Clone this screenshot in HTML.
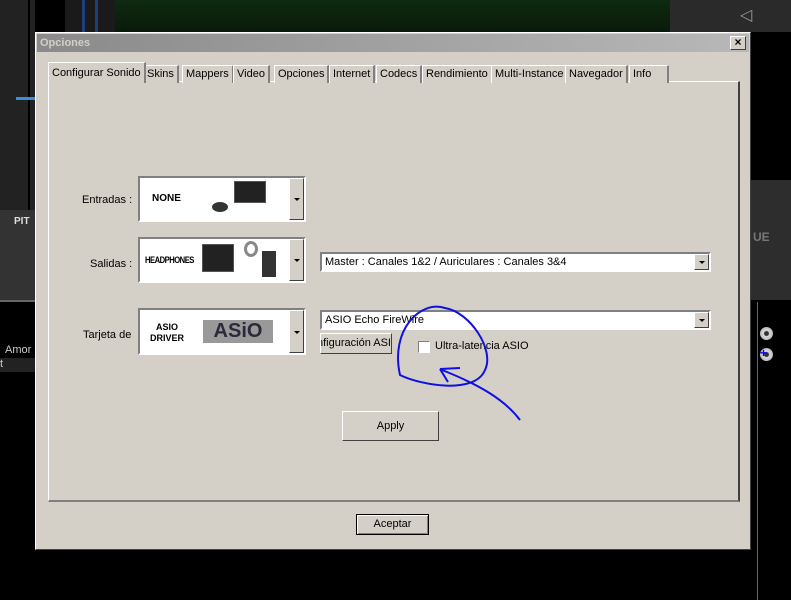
<!DOCTYPE html>
<html><head><meta charset="utf-8"><style>
*{box-sizing:border-box;margin:0;padding:0}
body{width:791px;height:600px;background:#000;position:relative;overflow:hidden;font-family:"Liberation Sans",sans-serif;font-size:11px;color:#000}
.abs{position:absolute}
.dlg{left:35px;top:32px;width:716px;height:518px;background:#d4d0c8;border:1px solid #fff;border-right-color:#404040;border-bottom-color:#404040}
.title{left:1px;top:1px;width:712px;height:18px;background:linear-gradient(90deg,#8a8a8a,#b8b8b8);color:#d4d0c8;font-weight:bold;padding:3px 3px;font-size:11px}
.xbtn{left:694px;top:3px;width:16px;height:14px;background:#d4d0c8;border:1px solid #fff;border-right-color:#404040;border-bottom-color:#404040;font-size:12px;line-height:11px;text-align:center;font-weight:bold}
.tab{top:32px;height:18px;border:1px solid #fff;border-bottom:none;border-right:2px solid #808080;padding:2px 3px;white-space:nowrap;background:#d4d0c8}
.panel{left:12px;top:48px;width:692px;height:421px;border:1px solid #fff;border-right:2px solid #404040;border-bottom:2px solid #808080}
.combo{background:#fff;border:2px inset #808080;border-style:solid;border-color:#808080 #fff #fff #808080}
.dd{position:absolute;right:0;top:0;bottom:0;width:15px;background:#d4d0c8;border:1px solid #fff;border-right-color:#404040;border-bottom-color:#404040}
.dd:after{content:"";position:absolute;left:4px;top:50%;margin-top:-1px;border:3px solid transparent;border-top:3px solid #000}
.btn{background:#d4d0c8;border:1px solid #fff;border-right-color:#404040;border-bottom-color:#404040;text-align:center;white-space:nowrap}
.lbl{font-size:11px}
.laptop{background:#222;border:1px solid #555}
</style></head><body>
<div class="abs" style="left:115px;top:0;width:555px;height:32px;background:linear-gradient(180deg,#0e2a10,#0a1a0a)"></div>
<div class="abs" style="left:65px;top:0;width:50px;height:32px;background:#1a1a1a"></div>
<div class="abs" style="left:82px;top:0;width:3px;height:32px;background:#1d3f7a"></div>
<div class="abs" style="left:95px;top:0;width:3px;height:32px;background:#1d3f7a"></div>
<div class="abs" style="left:670px;top:0;width:121px;height:32px;background:#2a2a2a"></div>
<div class="abs" style="left:740px;top:5px;width:18px;height:16px;color:#999;font-size:16px">◁</div>
<div class="abs" style="left:0;top:0;width:35px;height:210px;background:#222"></div>
<div class="abs" style="left:28px;top:0;width:2px;height:210px;background:#000"></div>
<div class="abs" style="left:16px;top:97px;width:19px;height:3px;background:#3a8fd8"></div>
<div class="abs" style="left:0;top:210px;width:35px;height:90px;background:#333"></div>
<div class="abs" style="left:14px;top:216px;color:#ddd;font-weight:bold;font-size:10px">PIT</div>
<div class="abs" style="left:0;top:300px;width:35px;height:2px;background:#666"></div>
<div class="abs" style="left:5px;top:344px;color:#ccc">Amor</div>
<div class="abs" style="left:0;top:358px;width:35px;height:14px;background:#222;color:#ccc">t</div>
<div class="abs" style="left:751px;top:180px;width:40px;height:120px;background:#2d2d2d"></div>
<div class="abs" style="left:753px;top:230px;color:#777;font-weight:bold;font-size:12px">UE</div>
<div class="abs" style="left:757px;top:302px;width:1px;height:298px;background:#666"></div>
<div class="abs" style="left:760px;top:327px;width:13px;height:13px;border-radius:50%;background:radial-gradient(circle,#333 2px,#ddd 3px,#999)"></div>
<div class="abs" style="left:760px;top:348px;width:13px;height:13px;border-radius:50%;background:radial-gradient(circle,#333 2px,#ddd 3px,#999)"></div>
<div class="abs" style="left:760px;top:348px;color:#00f;font-weight:bold;font-size:12px;line-height:10px">+</div>

<div class="abs dlg">
 <div class="abs title">Opciones</div>
 <div class="abs xbtn">×</div>
 <div class="abs panel"></div>
 <div class="abs tab" style="left:12px;top:29px;height:21px;padding-top:4px;border-bottom:none;z-index:2">Configurar Sonido</div>
 <div class="abs tab" style="left:107px">Skins</div>
 <div class="abs tab" style="left:146px">Mappers</div>
 <div class="abs tab" style="left:197px">Video</div>
 <div class="abs tab" style="left:238px">Opciones</div>
 <div class="abs tab" style="left:293px">Internet</div>
 <div class="abs tab" style="left:340px">Codecs</div>
 <div class="abs tab" style="left:386px">Rendimiento</div>
 <div class="abs tab" style="left:455px">Multi-Instance</div>
 <div class="abs tab" style="left:529px">Navegador</div>
 <div class="abs tab" style="left:593px;width:40px">Info</div>
 <div class="abs" style="left:13px;top:49px;width:94px;height:2px;background:#d4d0c8;z-index:3"></div>

 <div class="abs lbl" style="left:46px;top:161px">Entradas :</div>
 <div class="abs combo" style="left:102px;top:143px;width:168px;height:46px">
  <div class="abs" style="left:12px;top:15px;font-weight:bold;font-size:10px">NONE</div>
  <div class="abs laptop" style="left:94px;top:3px;width:32px;height:22px"></div>
  <div class="abs" style="left:72px;top:24px;width:16px;height:10px;border-radius:50%;background:#333"></div>
  <div class="dd"></div>
 </div>
 <div class="abs lbl" style="left:54px;top:225px">Salidas :</div>
 <div class="abs combo" style="left:102px;top:204px;width:168px;height:46px">
  <div class="abs" style="left:5px;top:16px;font-weight:bold;font-size:9px;letter-spacing:-0.6px;transform:scaleX(0.85);transform-origin:left">HEADPHONES</div>
  <div class="abs laptop" style="left:62px;top:5px;width:32px;height:28px"></div>
  <div class="abs" style="left:104px;top:2px;width:14px;height:16px;border:3px solid #888;border-radius:50%"></div>
  <div class="abs" style="left:122px;top:12px;width:14px;height:26px;background:#333"></div>
  <div class="dd"></div>
 </div>
 <div class="abs lbl" style="left:47px;top:296px">Tarjeta de</div>
 <div class="abs combo" style="left:102px;top:275px;width:168px;height:47px">
  <div class="abs" style="left:10px;top:12px;font-weight:bold;font-size:9px;text-align:center;line-height:11px">ASIO<br>DRIVER</div>
  <div class="abs" style="left:63px;top:10px;width:70px;height:23px;background:#999;color:#2a2a3a;font-weight:bold;font-size:20px;line-height:23px;text-align:center">ASiO</div>
  <div class="dd"></div>
 </div>

 <div class="abs combo" style="left:284px;top:219px;width:391px;height:20px;padding:2px 3px">Master : Canales 1&amp;2 / Auriculares : Canales 3&amp;4<div class="dd"></div></div>
 <div class="abs combo" style="left:284px;top:277px;width:391px;height:20px;padding:2px 3px">ASIO Echo FireWire<div class="dd"></div></div>
 <div class="abs btn" style="left:284px;top:300px;width:72px;height:21px;padding-top:3px;overflow:hidden;direction:rtl;text-align:left;padding-left:2px"><span style="direction:ltr;unicode-bidi:bidi-override">nfiguración ASI</span></div>
 <div class="abs" style="left:382px;top:308px;width:12px;height:12px;background:#fff;border:1px solid #808080;border-right-color:#fff;border-bottom-color:#fff"></div>
 <div class="abs" style="left:399px;top:307px">Ultra-latencia ASIO</div>
 <div class="abs btn" style="left:306px;top:378px;width:97px;height:30px;padding-top:8px">Apply</div>
 <div class="abs btn" style="left:320px;top:481px;width:73px;height:21px;padding-top:3px;border:1px solid #000;box-shadow:inset 1px 1px #fff,inset -1px -1px #808080">Aceptar</div>
</div>

<svg class="abs" style="left:0;top:0" width="791" height="600">
 <path d="M400,375 C390,330 420,300 445,308 C470,312 495,350 485,370 C475,395 420,385 400,375 Z" fill="none" stroke="#1010e0" stroke-width="2"/>
 <path d="M440,369 L460,368 M440,369 L448,382 M442,370 C480,385 505,400 520,420" fill="none" stroke="#1010e0" stroke-width="2"/>
</svg>
</body></html>
